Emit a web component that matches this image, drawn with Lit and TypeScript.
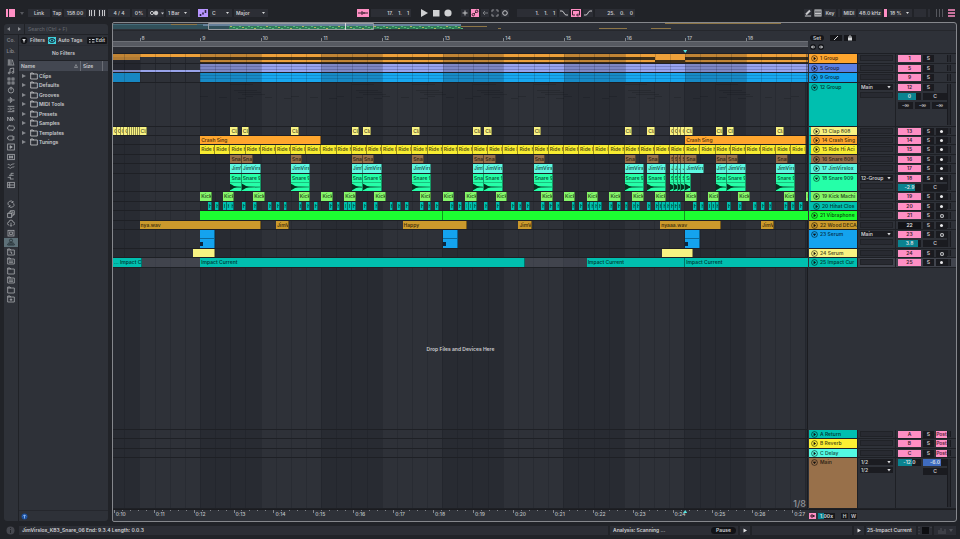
import { LitElement, html, svg, css, nothing, TemplateResult } from "lit";
import { customElement, property } from "lit/decorators.js";
import { styleMap } from "lit/directives/style-map.js";
import { classMap } from "lit/directives/class-map.js";

/* Timeline positions are counted in sixteenth notes from bar 9. */
const VIEW_START = -23;
const VIEW_SPAN = 183.4;
const pct = (n: number) => `${(n / VIEW_SPAN) * 100}%`;
const at = (n: number, len?: number) =>
  styleMap(len === undefined ? { left: pct(n - VIEW_START) } : { left: pct(n - VIEW_START), width: pct(len) });
const range = (from: number, to: number, step = 1) => {
  const out: number[] = [];
  for (let v = from; v < to; v += step) out.push(v);
  return out;
};

type Clip = [start: number, length: number, label?: string];
interface Track {
  id: string;
  name: string;
  color: string;
  h: number;
  kind?: "orange" | "violet" | "blue" | "fold" | "wave" | "midi";
  clips?: Clip[];
  child?: boolean;
  open?: boolean;
  route?: string;
  vol?: string;
  level?: number;
  sends?: boolean;
  arm?: "dot" | "midi";
  off?: boolean;
  selected?: boolean;
}

const same = (starts: number[], len: number, label: string): Clip[] => starts.map((s) => [s, len, label]);
const pairs = (short: number, long: number, label: string, last = long): Clip[] => [
  [8, short, label], [11, long, label], [24, long, label], [40, short, label], [43, long, label],
  [56, long, label], [72, short, label], [75, long, label], [88, long, label], [112, long, label],
  [118, long, label], [124, 1, label], [125, 1, label], [126, 1, label], [127, 1, label], [128, last, label],
  [136, short, label], [139, long, label], [152, long, label],
];
const hat = [2, 4, 6, 6.5, 7, 7.5, 8, 11, 14, 18, 20, 22, 26, 28, 30];
const hats = [
  ...hat, ...hat.map((n) => n + 32), ...hat.map((n) => n + 64), 98, 100, 102, 103, 104, 105, 108, 110, 112, 114,
  115, 118, 120, 121, 122, 123, 124, 125, 126, ...hat.map((n) => n + 128),
];

const TRACKS: Track[] = [
  { id: "1", name: "Group", color: "#ffa62e", h: 10, kind: "orange" },
  { id: "5", name: "Group", color: "#5a80e4", h: 9, kind: "violet" },
  { id: "9", name: "Group", color: "#14a3ee", h: 10, kind: "blue" },
  { id: "12", name: "Group", color: "#00bfaf", h: 44, kind: "fold", open: true, route: "Main", vol: "0", level: 80, sends: true },
  {
    id: "13", name: "Clap 808", color: "#f8f382", h: 9, child: true, arm: "dot",
    clips: [
      ...same([-23, -22, -21, -20], 1, "C"), ...same(range(-19, -16, 0.5), 0.5, ""), [-16, 2, "Cla"],
      ...same([8, 11, 24, 40, 43, 56, 72, 75, 88, 112, 118], 2, "Cla"), ...same([124, 125, 126, 127], 1, "C"),
      ...same([128, 136, 139, 152], 2, "Cla"),
    ],
  },
  { id: "14", name: "Crash Sing", color: "#ffa62e", h: 9, child: true, arm: "dot", clips: [[0, 32, "Crash Sing"], [128, 32, "Crash Sing"]] },
  { id: "15", name: "Ride Hi Aci", color: "#f7ec31", h: 10, child: true, arm: "dot", clips: same(range(0, 160, 4), 4, "Ride Hi") },
  { id: "16", name: "Snare 808", color: "#98704a", h: 9, child: true, arm: "dot", clips: pairs(3, 3, "Snare") },
  { id: "17", name: "JimVirslox", color: "#5df7e0", h: 10, child: true, arm: "dot", clips: pairs(3, 5, "JimVirs") },
  { id: "18", name: "Snare 909", color: "#25ffa8", h: 18, child: true, arm: "dot", kind: "wave", open: true, route: "12-Group", vol: "-2.9", level: 72, clips: pairs(3, 5, "Snare 9", 1.5) },
  {
    id: "19", name: "Kick Machi", color: "#84f56a", h: 10, child: true, arm: "dot",
    clips: same([0, 6, 14, 26, 32, 38, 46, 58, 64, 70, 78, 90, 96, 102, 108, 114, 120, 128, 134, 142, 154, 160], 3, "Kick"),
  },
  { id: "20", name: "Hihat Clos", color: "#00bfaf", h: 9, child: true, arm: "dot", clips: hats.map((n): Clip => [n, n % 1 ? 0.5 : 1, n % 1 ? "" : "H"]) },
  { id: "21", name: "Vibraphone", color: "#1cff31", h: 10, arm: "midi", clips: [[0, 64], [64, 64], [128, 33]] },
  {
    id: "22", name: "Wood DECA", color: "#cb9a2c", h: 9, arm: "dot", off: true,
    clips: [[-16, 32, "nya.wav"], [20, 3.5, "JimVi"], [53.4, 17, "Happy"], [84, 3.5, "JimVi"], [121.4, 16, "nyaaa.wav"], [148, 3.5, "JimVi"]],
  },
  { id: "23", name: "Serum", color: "#14a3ee", h: 19, arm: "midi", kind: "midi", open: true, route: "Main", vol: "3.8", level: 88, clips: [[0, 4], [64, 4], [128, 4]] },
  { id: "24", name: "Serum", color: "#f8f382", h: 9, arm: "midi", clips: [[-2, 6], [122, 8]] },
  {
    id: "25", name: "Impact Cur", color: "#00bfaf", h: 10, arm: "dot", selected: true,
    clips: [[-23, 7.6, "... Impact C"], [0, 85.7, "Impact Current"], [102, 26, "Impact Current"], [128, 33, "Impact Current"]],
  },
];
const RETURNS = [
  { id: "A", name: "Return", color: "#00bfaf", h: 9 },
  { id: "B", name: "Reverb", color: "#fcf033", h: 10 },
  { id: "C", name: "Delay", color: "#53fae3", h: 9 },
];

const ICONS: Record<string, TemplateResult> = {
  books: svg`<path d="M2 2v8M4 2v8M6 2v8M8 2.5l2 7.5M1 10.5h10"/>`,
  note: svg`<path d="M4.5 9V2.5L10 1.5V8"/><circle cx="3.2" cy="9" r="1.4"/><circle cx="8.7" cy="8.2" r="1.4"/>`,
  grid: svg`<rect x="1.5" y="1.5" width="3" height="3"/><rect x="7.5" y="1.5" width="3" height="3"/><rect x="1.5" y="7.5" width="3" height="3"/><rect x="7.5" y="7.5" width="3" height="3"/>`,
  dial: svg`<circle cx="6" cy="6.5" r="4"/><path d="M6 6.500V1"/>`,
  wave: svg`<path d="M1 6h1M3 4v4M5 1.500v9M7 3v6M9 4.500v3M10 6h1.500"/>`,
  fx: svg`<path d="M1 2h10M1 10h10M1 6h3M4 4l3 2-3 2M8 5h3M8 8h3"/>`,
  zig: svg`<path d="M1 9V3l4 6V3l3 6V3l3 5"/>`,
  plug: svg`<path d="M3.500 3h5a2 2 0 0 1 2 3 2 2 0 0 1-2 3h-5a2 2 0 0 1-2-3 2 2 0 0 1 2-3zM0 6h1.500M10.500 6H12M4 1.500V3M8 9v1.500"/>`,
  jack: svg`<path d="M4 3h5v6H4a3 3 0 0 1 0-6zM9 4.500h2.500M9 7.500h2.500M0 6h1.500"/>`,
  clip: svg`<rect x="1" y="1.500" width="10" height="9"/><path d="M4.500 4l3.500 2-3.500 2z" fill="currentColor"/>`,
  sampler: svg`<rect x="1" y="2" width="10" height="8"/><path d="M3 5h6M3 7h6M4 4v4M8 4v4"/>`,
  groove: svg`<path d="M1 4.500c2-3 3 2 5 0s3-1 5-2M1 9c2-3 3 2 5 0s3-1 5-2"/>`,
  tuning: svg`<path d="M1 8h4M3 5h7M6 2h4M5 10.500h5M6 2v3M5 7v4"/>`,
  table: svg`<rect x="1" y="2" width="10" height="8"/><path d="M1 6h10M4 2v8"/>`,
  sync: svg`<path d="M2 7.500A4 4 0 0 1 9 3.500M10 5a4 4 0 0 1-7 4M9 1.500v2.300H6.500M3 11V8.700h2.500"/>`,
  packs: svg`<rect x="1" y="5" width="6" height="6"/><path d="M3 5V3h6v6H7M5 3V1h6v6H9"/>`,
  cloud: svg`<path d="M3 9a2.200 2.200 0 0 1 0-4.400 3 3 0 0 1 6 0A2.200 2.200 0 0 1 9.500 9M6 5.500V11M4.300 9.300L6 11l1.700-1.700"/>`,
  chip: svg`<rect x="1.500" y="2" width="9" height="8.500"/><rect x="4" y="4.500" width="4" height="3.500"/>`,
  user: svg`<circle cx="6" cy="3.800" r="2.300"/><path d="M1 10.500c0-3 2.500-3.500 5-3.500s5 .5 5 3.500zM3 9h6"/>`,
  folder: svg`<path d="M1 10.500v-9h3.500l1 1.500H11v7.500zM1 3h5"/>`,
  folderGrid: svg`<path d="M1 10.500v-9h3.500l1 1.500H11v7.500zM1 3h5M3 6h6M3 8h6"/>`,
  folderUser: svg`<path d="M1 10.500v-9h3.500l1 1.500H11v7.500zM1 3h5M4 6h3v3"/>`,
  folderAdd: svg`<path d="M1 10.500v-9h3.500l1 1.500H11v7.500zM1 3h5M6 5v4M4 7h4"/>`,
};
const icon = (name: string) => html`<svg class="icon" viewBox="0 0 12 12" aria-hidden="true">${ICONS[name]}</svg>`;

const shared = css`
  * { box-sizing: border-box; }
  button, input, select {
    font: inherit; color: inherit; background: none; border: 0; border-radius: 0; padding: 0; margin: 0;
    appearance: none; outline: 0; min-width: 0; line-height: inherit;
  }
  .icon { display: block; width: 8px; height: 8px; fill: none; stroke: currentColor; stroke-width: 1.2; }
  .drop { display: grid; align-items: center; min-width: 0; }
  .drop > select { grid-area: 1 / 1; width: 100%; }
  .drop::after {
    content: ""; grid-area: 1 / 1; justify-self: end; width: 4px; height: 3px; margin-right: 2px;
    background: #d6d7d9; clip-path: polygon(0 0, 100% 0, 50% 100%); pointer-events: none;
  }
`;
const drop = (label: string, value: string, cls = "") =>
  html`<span class="drop ${cls}"><select aria-label=${label}><option>${value}</option></select></span>`;

@customElement("transport-bar")
export class TransportBar extends LitElement {
  static styles = [shared, css`
    :host { display: flex; align-items: center; height: 22px; padding: 2px 4px 0 6px; color: #c6c7ca; }
    .set { display: flex; align-items: center; gap: 2px; }
    .a { flex: 89; } .b { flex: 169; }
    .cell { height: 8px; line-height: 8px; background: #2c2e35; text-align: center; display: block; }
    .drop { height: 8px; line-height: 8px; background: #2c2e35; padding-left: 2px; }
    .drop::after { width: 3px; height: 2px; margin-right: 3px; }
    .w2 { width: 2px; } .w8 { width: 8px; } .w10 { width: 10px; } .w12 { width: 12px; } .w14 { width: 14px; } .w16 { width: 16px; }
    .w22 { width: 22px; } .w24 { width: 24px; } .w34 { width: 34px; } .w40 { width: 40px; }
    .pos { display: flex; justify-content: flex-end; gap: 5px; padding-right: 2px; font-weight: 600; }
    .pink { background: #ff8fc4; color: #3b2230; }
    .violet { background: #b795ff; color: #2c2440; }
    .gap6 { margin-left: 6px; }
    svg { display: block; margin: 0 auto; height: 8px; fill: none; stroke: currentColor; }
    .solid { fill: currentColor; stroke: none; }
    .ico { color: #d0d1d3; background: none; }
    .hot { color: #ff8fc4; }
    .dim { color: #55575d; }
    .cpu { display: grid; grid-template-columns: 3px 1fr; gap: 1px; height: 8px; }
    .cpu::before { content: ""; background: #ff8fc4; }
  `];
  private position(label: string, parts: string[], cls = "") {
    return html`<div class="cell w40 pos ${cls}" role="group" aria-label=${label}>${parts.map((p) => html`<span>${p}</span>`)}</div>`;
  }
  render() {
    return html`
      <div class="set">
        <button class="w10 hot" aria-label="Browser"><svg class="solid" viewBox="0 0 10 8"><path d="M0 0h2v8H0zM3 0h6v8H3z"/></svg></button>
        <button class="w8 dim" aria-label="View menu"><svg class="solid" viewBox="0 0 8 8"><path d="M2 3h4L4 6z"/></svg></button>
        <button class="cell w22">Link</button>
        <button class="cell w10">Tap</button>
        <input class="cell w22" aria-label="Tempo" value="158.00">
        <button class="cell w8" aria-label="Nudge down"><svg viewBox="0 0 8 8"><path d="M1.500 1v6M3.500 1v6M6.500 1v6"/></svg></button>
        <button class="cell w8" aria-label="Nudge up"><svg viewBox="0 0 8 8"><path d="M1.500 1v6M4.500 1v6M6.500 1v6"/></svg></button>
        <input class="cell w22" aria-label="Time signature" value="4 / 4">
        <input class="cell w14" aria-label="Groove amount" value="0%">
        <button class="cell w16" aria-label="Metronome"><svg viewBox="0 0 16 8"><circle cx="4" cy="4" r="1.600"/><circle cx="8" cy="4" r="1.800" fill="currentColor"/><path d="M13 3.500h3l-1.500 2z" fill="currentColor" stroke="none"/></svg></button>
        ${drop("Quantization", "1 Bar", "w24")}
        <button class="cell w10 violet gap6" aria-label="Scale mode"><svg viewBox="0 0 10 8"><path d="M2.500 5v2M5 3.500v2M7.500 1v3" stroke-width="1.600"/></svg></button>
        ${drop("Root note", "C", "w22")}${drop("Scale", "Major", "w34")}
      </div>
      <span class="a"></span>
      <div class="set">
        <button class="cell w12 pink" aria-label="Follow"><svg viewBox="0 0 12 8"><path d="M1 4h10M5 2v4M7 3v2"/></svg></button>
        ${this.position("Position", ["17.", "1.", "1"])}
        <button class="w10 ico gap6" aria-label="Play"><svg class="solid" viewBox="0 0 8 8"><path d="M1 0l7 4-7 4z"/></svg></button>
        <button class="w10 ico" aria-label="Stop"><svg class="solid" viewBox="0 0 8 8"><path d="M1 1h6.500v6.500H1z"/></svg></button>
        <button class="w10 ico" aria-label="Record"><svg class="solid" viewBox="0 0 8 8"><circle cx="4" cy="4" r="3.600"/></svg></button>
        <button class="cell w8 gap6" aria-label="Overdub"><svg viewBox="0 0 8 8"><path d="M4 1.500v5M1.500 4h5"/></svg></button>
        <button class="cell w8 pink" aria-label="Automation arm"><svg viewBox="0 0 8 8"><circle cx="2.300" cy="5.700" r="1.200"/><circle cx="5.700" cy="2.300" r="1.200"/><path d="M3 5l2-2"/></svg></button>
        <button class="cell w8" aria-label="Re-enable automation"><svg viewBox="0 0 8 8" opacity=".5"><path d="M7 4H2M4 2L2 4l2 2"/></svg></button>
        <button class="cell w8" aria-label="Capture"><svg viewBox="0 0 8 8" opacity=".6"><path d="M1 3V1h2M5 1h2v2M7 5v2H5M3 7H1V5"/></svg></button>
        <button class="cell w8" aria-label="Session record"><svg viewBox="0 0 8 8"><circle cx="4" cy="4" r="2.300"/></svg></button>
        ${this.position("Loop start", ["1.", "1.", "1"], "gap6")}
        <button class="cell w10" aria-label="Punch in"><svg viewBox="0 0 10 8"><path d="M1 2h2c2 0 2 4 4 4h2"/></svg></button>
        <button class="cell w10 pink" aria-label="Loop"><svg viewBox="0 0 10 8"><path d="M4 6H1.500V1.500h7V6H6M7 4.500L5.500 6 7 7.500"/></svg></button>
        <button class="cell w10" aria-label="Punch out"><svg viewBox="0 0 10 8"><path d="M1 6h2c2 0 2-4 4-4h2"/></svg></button>
        ${this.position("Loop length", ["25.", "0.", "0"])}
      </div>
      <span class="b"></span>
      <div class="set">
        <button class="cell w8" aria-label="Draw mode"><svg viewBox="0 0 8 8"><path d="M1 7h6"/><path d="M2 5.500L6 1.500" stroke-width="2"/></svg></button>
        <button class="cell w8" aria-label="Computer keyboard"><svg viewBox="0 0 8 8"><rect x="1" y="1" width="6" height="6"/><path d="M3 1v6M5 1v6M1 4.500h6"/></svg></button>
        <button class="cell w12">Key</button>
        <span class="cell w2"></span>
        <button class="cell w14">MIDI</button>
        <span class="cell w24">48.0 kHz</span>
        <span class="cpu">${drop("CPU load", "18 %", "w24")}</span>
        <span class="cell w12"></span><span class="cell w2"></span>
        <button class="w12 dim" aria-label="Session view"><svg viewBox="0 0 12 8"><path d="M4.500 0v8M7.500 0v8M10.500 0v8"/></svg></button>
        <button class="w10 hot" aria-label="Arrangement view"><svg viewBox="0 0 10 8"><path d="M2 1h7M2 4h7M2 7h7" stroke-width="1.600"/></svg></button>
      </div>`;
  }
}

@customElement("file-browser")
export class FileBrowser extends LitElement {
  static styles = [shared, css`
    :host {
      display: grid; grid-template: 10px 1fr / 14px 1fr; column-gap: 1px; row-gap: 1px;
      background: #202227; color: #c9cacd; border-radius: 3px; overflow: hidden;
    }
    .top { grid-column: 1 / 3; display: flex; background: #2e3138; line-height: 10px; }
    .nav { width: 10px; color: #8b8d92; text-align: center; }
    .nav svg { display: block; margin: 0 auto; width: 4px; height: 4px; fill: currentColor; }
    .search { flex: 1; border-left: 1px solid #202227; padding-left: 3px; font-weight: 500; }
    .search::placeholder { color: #62656c; opacity: 1; }
    .side { background: #2e3138; color: #a7a9ad; }
    .tag { display: block; line-height: 11px; text-align: center; color: #85878c; }
    .icons { display: grid; height: 247px; grid-auto-rows: 1fr; }
    .icons button { display: grid; place-items: center; }
    .icons .on { background: #5d7078; color: #202a2e; }
    .main { background: #2e3138; display: flex; flex-direction: column; }
    .filters { display: flex; align-items: center; height: 11px; border-bottom: 1px solid #2a2c33; }
    .filters button { display: flex; align-items: center; gap: 2px; height: 7px; }
    .filters svg { display: block; height: 7px; width: 8px; }
    .f { margin-left: 1px; } .t { margin-left: 3px; }
    .e { margin-left: auto; margin-right: 1px; background: #15161a; padding: 0 2px; border-radius: 1px; }
    .filters .e { gap: 1px; }
    .filters .e svg { width: 6px; }
    .none { height: 15px; line-height: 15px; text-align: center; border-bottom: 1px solid #202227; }
    .head { display: grid; grid-template-columns: 1fr 6px 28px; height: 10px; line-height: 10px; background: #434751; padding-left: 2px; }
    .head svg { width: 4px; height: 4px; margin-top: 3px; fill: none; stroke: #9a9ca1; stroke-width: .7; }
    .size { border-left: 1px solid #6a6d75; border-right: 1px solid #6a6d75; margin-right: 5px; padding-left: 2px; }
    ul { list-style: none; margin: 0; padding: 0; display: grid; grid-auto-rows: 1fr; height: 76px; }
    li { display: grid; grid-template-columns: 7px 8px 1fr; align-items: center; gap: 1px; padding-left: 3px; }
    li .tri { width: 4px; height: 4px; fill: #85878c; }
    .foot { margin-top: auto; height: 11px; border-top: 1px solid #25272d; padding: 2px 0 0 2px; }
    .foot button { display: block; } .foot svg { display: block; width: 7px; height: 7px; }
  `];
  render() {
    const side = ["books", "note", "grid", "dial", "wave", "fx", "zig", "plug", "jack", "clip", "sampler", "groove", "tuning", "table", "",
      "sync", "packs", "cloud", "chip", "user", "folderUser", "folderGrid", "folder", "folderGrid", "folder", "folderAdd"];
    const list = ["Clips", "Defaults", "Grooves", "MIDI Tools", "Presets", "Samples", "Templates", "Tunings"];
    return html`
      <div class="top">
        <button class="nav" aria-label="Back"><svg viewBox="0 0 4 4"><path d="M3 0v4L0 2z"/></svg></button>
        <button class="nav" aria-label="Forward"><svg viewBox="0 0 4 4"><path d="M1 0v4l3-2z"/></svg></button>
        <input class="search" aria-label="Search" placeholder="Search (Ctrl + F)">
      </div>
      <nav class="side">
        <span class="tag">Co.</span><span class="tag">Lib.</span>
        <div class="icons">${side.map((s) => s ? html`<button class=${s === "user" ? "on" : ""} aria-label=${s}>${icon(s)}</button>` : html`<span></span>`)}</div>
      </nav>
      <section class="main">
        <div class="filters">
          <button class="f"><svg viewBox="0 0 8 7"><circle cx="4" cy="3.500" r="3.400" fill="#121317"/><path d="M2.200 2h3.600L4.500 4v1.500h-1V4z" fill="#d6d7d9"/></svg>Filters</button>
          <button class="t"><svg viewBox="0 0 8 7"><path d="M0 0h8v7H0z" fill="#3fd0dc"/><ellipse cx="4" cy="3.500" rx="2.800" ry="1.900" fill="none" stroke="#123"/><circle cx="4" cy="3.500" r="1" fill="#123"/></svg>Auto Tags</button>
          <button class="e"><svg viewBox="0 0 6 7" fill="none" stroke="#d6d7d9"><path d="M0 2.500h1.500M0 5h1.500M3 2.500h2.500M3 5h2.500"/></svg>Edit</button>
        </div>
        <div class="none">No Filters</div>
        <div class="head"><span>Name</span><svg viewBox="0 0 4 4"><path d="M.5 3.500h3L2 .5z"/></svg><span class="size">Size</span></div>
        <ul>${list.map((n) => html`<li><svg class="tri" viewBox="0 0 4 4"><path d="M0 0v4l4-2z"/></svg>${icon("folder")}<span>${n}</span></li>`)}</ul>
        <div class="foot"><button aria-label="Tips"><svg viewBox="0 0 7 7"><circle cx="3.500" cy="3.500" r="3" fill="#1c4f9c"/><path d="M3.500 5.500V2M2 3.300L3.500 1.800 5 3.300" stroke="#9cc6ff" fill="none" stroke-width=".8"/></svg></button></div>
      </section>`;
  }
}

@customElement("arrangement-view")
export class ArrangementView extends LitElement {
  @property({ type: Array }) tracks: Track[] = TRACKS;

  static styles = [shared, css`
    :host {
      display: flex; flex-direction: column; border: 1px solid #85878c; border-radius: 2px 3px 3px 2px;
      background: #2e3138; color: #c9cacd; overflow: hidden; min-width: 0;
    }
    .overview { height: 8px; border-bottom: 1px solid #25272c; }
    .overview svg { display: block; width: 100%; height: 7px; }
    .ruler, .row, .times { display: grid; grid-template-columns: 1fr 50px 38px 60px; }
    .ruler { height: 23px; }
    .bars { display: grid; grid-template-rows: 10px 6px 7px; overflow: hidden; }
    .marks { position: relative; }
    .mark { position: absolute; top: 3px; bottom: 0; line-height: 8px; padding-left: 2px; color: #bfc0c3; font-weight: 500; }
    .mark::before { content: ""; position: absolute; left: 0; bottom: 0; height: 3px; width: 1px; background: #83868c; }
    .scrub { background: #575a62; border: 1px solid #6d7077; border-width: 1px 0; }
    .loc { position: relative; background: #2a2c33; }
    .start { position: absolute; bottom: 1px; width: 4px; height: 3px; margin-left: -2px; background: #57e5e0; clip-path: polygon(0 0, 100% 0, 50% 100%); }
    .times .start { top: 0; clip-path: polygon(50% 0, 100% 100%, 0 100%); }
    .tools { grid-column: 2 / 5; display: grid; grid-template-columns: 17px 11px 12px; grid-template-rows: 6px 6px; gap: 3px; padding: 4px 2px 0; align-content: start; }
    .tools button { background: #15161a; height: 6px; line-height: 6px; width: 12px; }
    .tools svg { display: block; margin: 0 auto; height: 6px; width: 8px; fill: none; stroke: #d6d7d9; }
    .tools .pill { border-radius: 3px; width: 14px; }
    .tools .pair { display: flex; gap: 2px; }
    .tools .pair button { width: 6px; border-radius: 3px; flex: none; }
    .tools .pair svg { width: 6px; }
    .stage { position: relative; flex: 1; display: flex; flex-direction: column; border-top: 1px solid #1d1f24; margin-top: -1px; }
    .grid { position: absolute; inset: 0; pointer-events: none; overflow: hidden; }
    .stage > .grid { right: 148px; border-right: 1px solid #1b1c20; }
    .shade, .beat { position: absolute; top: 0; bottom: 0; background: rgba(20, 22, 32, .2); }
    .beat { width: 1px; background: rgba(14, 16, 22, .17); }
    .row { position: relative; }
    .lane, .name, .route, .mix { border-bottom: 1px solid #1e2025; }
    .lane { position: relative; overflow: hidden; }
    .chosen .lane, .chosen .route, .chosen .mix { background: rgba(120, 124, 138, .26); }
    .clip { position: absolute; top: 0; bottom: 0; overflow: hidden; white-space: nowrap; line-height: 8px; padding-left: 1px; color: rgba(0, 0, 0, .7); border-right: 1px solid rgba(0, 0, 0, .4); }
    .clip svg { display: block; width: 19px; height: 9px; fill: #06331f; margin-left: -1px; border-top: 1px solid rgba(0, 0, 0, .25); }
    .pat { position: absolute; left: 0; bottom: 0; right: 0; height: 10px; border-top: 1px solid rgba(0, 0, 0, .35); }
    .pat::before { content: ""; display: block; width: 3px; height: 4px; margin-top: 3px; background: #0a2740; }
    .bar { position: absolute; }
    .bar.t3 { top: 0; height: 3px; } .bar.m3 { top: 3px; height: 3px; } .bar.b3 { top: 6px; height: 2px; } .bar.full { top: 0; bottom: 0; } .bar.low { top: 6px; height: 2px; }
    .bar.r1 { top: 2px; height: 1px; } .bar.r2 { top: 5px; height: 1px; }
    .ghost { position: absolute; height: 1px; background: rgba(10, 11, 16, .18); }
    .name { display: flex; align-items: flex-start; gap: 2px; margin-left: 1px; border-right: 1px solid #1e2025; padding-left: 2px; line-height: 8px; color: rgba(0, 0, 0, .7); overflow: hidden; white-space: nowrap; }
    .name.child { border-left: 2px solid #00bfaf; padding-left: 2px; }
    .name svg { flex: none; width: 7px; height: 7px; margin-top: 1px; fill: none; stroke: rgba(0, 0, 0, .75); stroke-width: .7; }
    .name b { font-weight: 600; }
    .route { border-right: 1px solid #1e2025; padding: 1px 2px 0; display: grid; align-content: start; gap: 2px; }
    .route > * { height: 6px; line-height: 6px; background: #282a31; border: 1px solid #202227; }
    .route .drop { background: #1b1c21; border: 0; padding-left: 1px; }
    .mix { display: grid; grid-template-columns: 48px 4px; column-gap: 1px; padding: 1px 0 0 2px; }
    .ctl { display: grid; grid-template-columns: 23px 11px 11px; column-gap: 2px; row-gap: 2px; grid-auto-rows: 7px; align-content: start; line-height: 7px; }
    .ctl > *, .send { background: #1a1b20; text-align: center; }
    .ctl .act { background: #ff8fc4; color: #3d1f2e; }
    .ctl .off { background: #121317; color: #e2e3e5; }
    .ctl .two { grid-column: 2 / 4; }
    .ctl .none { background: none; }
    .ctl .post { background: #ff8fc4; color: #5b1f3e; overflow: hidden; }
    .ctl .sends { grid-column: 1 / 4; display: grid; grid-template-columns: repeat(3, 1fr); gap: 2px; background: none; }
    .fill { position: relative; color: #dfe0e2; }
    .fill i { position: absolute; left: 0; top: 0; bottom: 0; background: #0a8390; }
    .fill i.blue { background: #3f6cc0; }
    .fill span { position: relative; }
    .dot { display: grid; place-items: center; }
    .dot::before { content: ""; width: 3px; height: 3px; border-radius: 50%; background: #e8e8ea; }
    .dot.midi::before { width: 4px; height: 4px; background: radial-gradient(#55565b 25%, #c4c5c8 45%); }
    .vu { border: 1px solid #191a1f; border-width: 0 1px; background: #26282e; margin-bottom: 1px; }
    .hint { flex: 1; min-height: 60px; display: grid; place-items: center; position: relative; margin-right: 148px; border-bottom: 1px solid #1e2025; }
    .main { height: 51px; }
    .zoom { position: absolute; right: 2px; bottom: 0; font-size: 9px; line-height: 9px; font-weight: 500; color: #93959a; }
    .times { height: 12px; border-top: 1px solid #1b1c20; }
    .times .marks { overflow: hidden; }
    .times .mark { top: 0; line-height: 9px; }
    .times .mark::before { bottom: auto; top: 0; }
    .tick { position: absolute; top: 0; width: 1px; height: 1px; background: #83868c; }
    .end { grid-column: 2 / 5; display: flex; align-items: center; gap: 2px; padding-left: 1px; line-height: 6px; }
    .end > * { height: 6px; background: #17181c; }
    .end .pk { background: #ff8fc4; width: 7px; } .end .pk svg { display: block; width: 7px; height: 6px; stroke: #3d1f2e; }
    .end .rate { width: 17px; text-align: center; }
    .end .hw { width: 7px; text-align: center; } .end .hw.first { margin-left: 4px; }
  `];

  private lines() {
    return html`<div class="grid">
      ${range(-32, 161, 32).map((n) => html`<i class="shade" style=${at(n, 16)}></i>`)}
      ${range(-20, 161, 4).map((n) => html`<i class="beat" style=${at(n)}></i>`)}
    </div>`;
  }

  private bar(cls: string, from: number, len: number, color: string) {
    return html`<i class="bar ${cls}" style=${styleMap({ left: pct(from - VIEW_START), width: pct(len), background: color })}></i>`;
  }

  private groupLane(kind?: string) {
    switch (kind) {
      case "orange":
        return html`${this.bar("full", 0, 161, "#3f2f17")}${this.bar("t3", -23, 184, "#eda03a")}${this.bar("m3", -23, 7, "#d9953a")}
          ${this.bar("b3", 0, 120, "#eda03a")}${this.bar("m3", 120, 8, "#eda03a")}${this.bar("b3", 128, 33, "#eda03a")}${this.lines()}`;
      case "violet":
        return html`${this.bar("low", -23, 23, "#98a3ea")}${this.bar("full", 0, 161, "#98a3ee")}${this.bar("r1", 0, 161, "#7a85c8")}${this.bar("r2", 0, 161, "#7a85c8")}${this.lines()}`;
      case "blue":
        return html`${this.bar("full", -23, 7, "#18a4ec")}${this.bar("full", 0, 161, "#18a8f0")}${this.bar("r1", 0, 161, "#1590d0")}${this.bar("r2", 0, 161, "#1590d0")}${this.lines()}`;
      case "fold":
        return html`${[8, 40, 56, 72, 88, 112, 136].flatMap((n) => [1, 7, 9, 11].map((y, k) =>
          html`<i class="ghost" style=${styleMap({ left: pct(n + k - VIEW_START), width: pct(6), top: `${y}px` })}></i>`))}
          ${range(0, 160, 4).map((n) => html`<i class="ghost" style=${styleMap({ left: pct(n + (n % 3) - VIEW_START), width: pct(2), top: `${13 + (n % 3)}px` })}></i>`)}`;
    }
    return nothing;
  }

  private clipBox(t: Track, [start, len, label]: Clip) {
    return html`<div class="clip" style=${styleMap({ left: pct(start - VIEW_START), width: pct(len), background: t.color })}>${label ?? nothing}
      ${t.kind === "wave" ? html`<svg viewBox="0 0 19 8" preserveAspectRatio="none"><path d="M0 .8l2 1 2 1.200 3 .6 12 .2v.4l-12 .3-3 .6-2 1.200-2 1z"/></svg>` : nothing}
      ${t.kind === "midi" ? html`<i class="pat"></i>` : nothing}
    </div>`;
  }

  private badge(open?: boolean) {
    return html`<svg viewBox="0 0 7 7"><circle cx="3.500" cy="3.500" r="2.900"/>${open
      ? svg`<path d="M2.300 2.900h2.400L3.500 4.700z" fill="#222"/>` : svg`<path d="M2.900 2.300v2.400l1.800-1.200z" fill="#222"/>`}</svg>`;
  }

  private trackRow(t: Track) {
    return html`<div class=${classMap({ row: true, chosen: !!t.selected })} style=${styleMap({ height: `${t.h}px` })}>
      <div class="lane">${this.groupLane(t.kind)}${t.clips?.map((c) => this.clipBox(t, c))}</div>
      <div class=${classMap({ name: true, child: !!t.child })} style=${styleMap({ background: t.color })}>${this.badge(t.open)}<b>${t.id} ${t.name}</b></div>
      <div class="route">${t.route ? html`${drop(`${t.name} output`, t.route)}<span></span>` : html`<span></span>`}</div>
      <div class="mix">
        <div class="ctl">
          <button class="act ${t.off ? "off" : ""}" aria-label="Activate track ${t.id}">${t.id}</button>
          <button aria-label="Solo ${t.id}">S</button>
          ${t.arm ? html`<button class="dot ${t.arm}" aria-label="Arm ${t.id}"></button>` : html`<span class="none"></span>`}
          ${t.vol ? html`<span class="fill"><i style=${styleMap({ width: `${t.level}%` })}></i><span>${t.vol}</span></span><span class="two">C</span>` : nothing}
          ${t.sends ? html`<span class="sends">${[1, 2, 3].map(() => html`<span class="send">-∞</span>`)}</span>` : nothing}
        </div>
        <i class="vu"></i>
      </div>
    </div>`;
  }

  private map() {
    const notes = range(117, 350, 3);
    return svg`
      <path d="M0 1h348v5H0z" fill="#31505a"/><path d="M0 1h120v1H0z" fill="#456a78"/><path d="M90 1h258v2H90z" fill="#66809a"/>
      <path d="M116 3h232v3H116z" fill="#2f7c58"/>
      ${notes.map((x, i) => svg`<rect x=${x} y=${3 + (i % 3)} width="2" height="1" fill=${i % 4 ? "#55b877" : "#a8b860"}/>`)}
      <path d="M58 1h26v1H58zM348 3h26v1h-26zM486 5h28v1h-28zM538 5h20v1h-20zM552 0h116v1H552zM385 5h3v1h-3z" fill="#8d7546"/>
      <path d="M95.500 .5h165v6h-165z" fill="none" stroke="#9a9ca2"/><path d="M232 0h1v7h-1z" fill="#d6d7d9"/>`;
  }

  render() {
    return html`
      <div class="overview"><svg viewBox="0 0 843 7" preserveAspectRatio="none">${this.map()}</svg></div>
      <div class="ruler">
        <div class="bars">
          <div class="marks">${range(8, 19).map((b) => html`<span class="mark" style=${at((b - 9) * 16)}>${b}</span>`)}</div>
          <div class="scrub"></div>
          <div class="loc"><i class="start" style=${at(128)}></i></div>
        </div>
        <div class="tools">
          <button class="pill">Set</button>
          <button aria-label="Automation mode"><svg viewBox="0 0 8 6"><path d="M2 5l4-4M2 4.500h1M5 1.500h1"/></svg></button>
          <button aria-label="Lock envelopes"><svg viewBox="0 0 8 6"><path d="M2 2.500h4v3H2z" fill="#d6d7d9" stroke="none"/><path d="M3 3V1h2v2" stroke-width=".8"/></svg></button>
          <span class="pair">
            <button aria-label="Previous locator"><svg viewBox="0 0 6 6"><path d="M5 3H1.500M3 1.500L1.500 3 3 4.500"/></svg></button>
            <button aria-label="Next locator"><svg viewBox="0 0 6 6"><path d="M1 3h3.500M3 1.500L4.500 3 3 4.500"/></svg></button>
          </span>
        </div>
      </div>
      <div class="stage">
        ${this.lines()}
        ${this.tracks.map((t) => this.trackRow(t))}
        <div class="hint">Drop Files and Devices Here</div>
        ${RETURNS.map((t) => html`<div class="row" style=${styleMap({ height: `${t.h}px` })}>
          <div class="lane"></div>
          <div class="name" style=${styleMap({ background: t.color })}>${this.badge()}<b>${t.id} ${t.name}</b></div>
          <div class="route"><span></span></div>
          <div class="mix"><div class="ctl"><button class="act" aria-label="Activate ${t.name}">${t.id}</button><button aria-label="Solo ${t.name}">S</button><button class="post">Post</button></div><i class="vu"></i></div>
        </div>`)}
        <div class="row main">
          <div class="lane"><span class="zoom">1/8</span></div>
          <div class="name" style=${styleMap({ background: "#98704a" })}>${this.badge(true)}<b>Main</b></div>
          <div class="route">${drop("Cue out", "1/2")}${drop("Main out", "1/2")}</div>
          <div class="mix"><div class="ctl">
            <span class="fill"><i style=${styleMap({ width: "60%" })}></i><span>-12.0</span></span>
            <span class="fill two"><i class="blue" style=${styleMap({ width: "75%" })}></i><span>-6.0</span></span>
            <span class="none"></span><span class="two">C</span>
          </div><i class="vu"></i></div>
        </div>
      </div>
      <div class="times">
        <div class="marks">
          ${range(10, 28).map((s) => html`<span class="mark" style=${at(-22.8 + (s - 10) * 10.533)}>0:${s}</span>
            ${[1, 2, 3, 4].map((k) => html`<i class="tick" style=${at(-22.8 + (s - 10 + k / 5) * 10.533)}></i>`)}`)}
          <i class="start" style=${at(128)}></i>
        </div>
        <div class="end">
          <button class="pk" aria-label="Optimize height"><svg viewBox="0 0 7 6"><path d="M1 3h5M3 1v4M4.500 2v2"/></svg></button>
          <span class="rate fill"><i style=${styleMap({ width: "35%" })}></i><span>1.00x</span></span>
          <button class="hw first">H</button><button class="hw">W</button>
        </div>
      </div>`;
  }
}

@customElement("status-bar")
export class StatusBar extends LitElement {
  static styles = [shared, css`
    :host { display: grid; grid-template-columns: 13px 1fr 128px 10px 100px 10px 50px 14px 22px; column-gap: 2px; align-items: center; height: 17px; padding: 0 4px; color: #d0d1d4; }
    :host > * { height: 9px; line-height: 9px; background: #2c2e35; white-space: nowrap; overflow: hidden; }
    button, .msg, .task, .name, .slot { height: 9px; line-height: 9px; background: #2c2e35; white-space: nowrap; }
    .info { background: none; }
    svg { display: block; height: 9px; width: 100%; }
    .msg { padding-left: 3px; }
    .name { padding-left: 1px; }
    .task { display: flex; align-items: center; padding: 0 2px 0 3px; }
    .task button { margin-left: auto; background: #121317; border-radius: 4px; width: 25px; height: 7px; line-height: 7px; }
  `];
  render() {
    const play = html`<svg viewBox="0 0 9 9"><path d="M3 2.500v4L6.500 4.500z" fill="#e2e3e5"/></svg>`;
    return html`
      <button class="info" aria-label="Info"><svg viewBox="0 0 9 9"><circle cx="4.500" cy="4.500" r="4" fill="#45474e"/><path d="M4.500 4v3M4.500 2v1" stroke="#222429"/></svg></button>
      <div class="msg">JimVirslox_KB3_Snare_06 End: 9.3.4 Length: 0.0.3</div>
      <div class="task"><span>Analysis: Scanning ...</span><button>Pause</button></div>
      <button aria-label="Show clip view">${play}</button>
      <div class="slot"></div>
      <button aria-label="Show device view">${play}</button>
      <div class="name">25-Impact Current</div>
      <div class="dev"><svg viewBox="0 0 14 9"><path d="M4 1h7v7H4z" fill="#0d0e11"/><path d="M1 1v7M13 1v1" stroke="#4a4c53" stroke-dasharray="1 2"/></svg></div>
      <div class="lv"><svg viewBox="0 0 20 9"><path d="M4 4v4M6 2v6M8 5v3M10 3v5" stroke="#4f5158"/><path d="M14 3h4l-2 3z" fill="#4f5158"/></svg></div>`;
  }
}

@customElement("app-root")
export class AppRoot extends LitElement {
  static styles = css`
    :host {
      display: grid; grid-template-rows: 22px 1fr 17px; min-height: 100vh; background: #212328;
      font: 600 5px/8px Inter, "Liberation Sans", sans-serif;
    }
    .body { display: grid; grid-template-columns: 104px 1fr; column-gap: 4px; padding: 0 3px 0 4px; }
    file-browser { margin: 2px 0 1px; }
  `;
  render() {
    return html`
      <transport-bar></transport-bar>
      <div class="body"><file-browser></file-browser><arrangement-view></arrangement-view></div>
      <status-bar></status-bar>`;
  }
}
